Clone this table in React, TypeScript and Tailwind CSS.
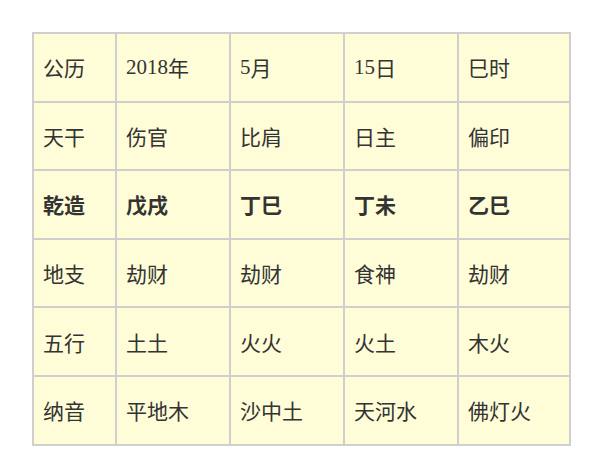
const rows: { cells: string[]; bold?: boolean }[] = [
  { cells: ['公历', '2018年', '5月', '15日', '巳时'] },
  { cells: ['天干', '伤官', '比肩', '日主', '偏印'] },
  { cells: ['乾造', '戊戌', '丁巳', '丁未', '乙巳'], bold: true },
  { cells: ['地支', '劫财', '劫财', '食神', '劫财'] },
  { cells: ['五行', '土土', '火火', '火土', '木火'] },
  { cells: ['纳音', '平地木', '沙中土', '天河水', '佛灯火'] },
];

// digits in the date row are set in a serif face, the rest in CJK sans
function CellText({ text }: { text: string }) {
  const parts = text.split(/(\d+)/).filter(Boolean);
  return (
    <>
      {parts.map((p, i) =>
        /^\d+$/.test(p) ? (
          <span key={i} className="font-['Liberation_Serif',serif]">
            {p}
          </span>
        ) : (
          <span key={i}>{p}</span>
        )
      )}
    </>
  );
}

export default function App() {
  return (
    <div className="w-[600px] h-[474px] bg-white pt-[32px] pl-[32px] font-['Noto_Sans_CJK_SC','Noto_Sans',sans-serif] text-[#333]">
      <div className="grid w-max grid-cols-[81px_112px_112px_112px_110px] auto-rows-[66.6px] gap-[2px] p-[2px] bg-[#cfcfcf]">
        {rows.map((row, r) =>
          row.cells.map((c, i) => (
            <div
              key={`${r}-${i}`}
              className={`flex items-center pl-[9px] pt-[1px] bg-[#fefdd8] text-[21px] leading-none ${row.bold ? 'font-bold' : ''}`}
            >
              <CellText text={c} />
            </div>
          ))
        )}
      </div>
    </div>
  );
}
